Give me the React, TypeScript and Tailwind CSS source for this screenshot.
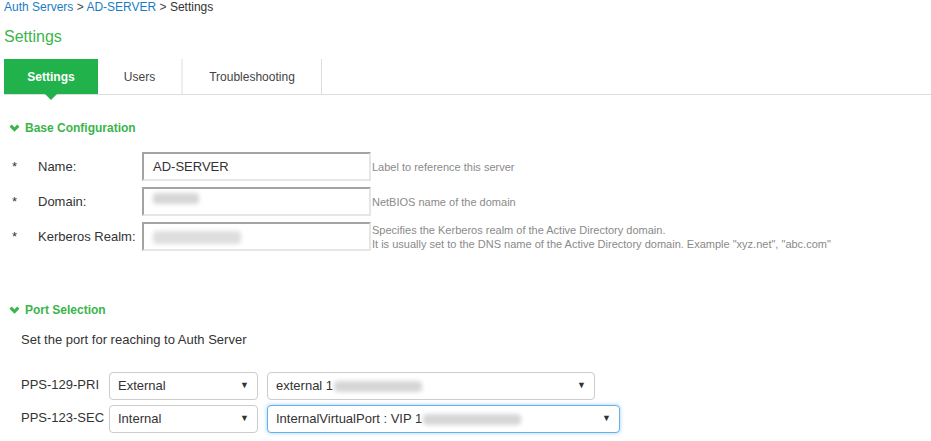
import React from 'react';

const green = 'text-[#3bb54a]';

function Chevron() {
  return (
    <svg width="11" height="8" viewBox="0 0 11 8" className="mr-[5px] shrink-0">
      <polyline points="1.6,1.6 5.5,5.6 9.4,1.6" fill="none" stroke="#3bb54a" strokeWidth="3" />
    </svg>
  );
}

function SectionHeader({ title }: { title: string }) {
  return (
    <div className={`flex items-center h-[16px] pl-[9px] text-[12px] font-bold ${green}`}>
      <Chevron />
      <span>{title}</span>
    </div>
  );
}

function Blur({ w, className = '' }: { w: number; className?: string }) {
  return (
    <span
      className={`inline-block h-[11px] bg-[#d6d6d6] blur-[2px] rounded-sm align-middle ${className}`}
      style={{ width: w }}
    />
  );
}

function FieldRow({
  label,
  children,
  help,
}: {
  label: string;
  children: React.ReactNode;
  help: React.ReactNode;
}) {
  return (
    <div className="flex items-center h-[29px]">
      <span className="w-[24px] shrink-0 pl-[12px] text-[13px] text-[#333]">*</span>
      <span className="w-[118px] shrink-0 pl-[14px] text-[13px] text-[#333] whitespace-nowrap">{label}</span>
      <div className="w-[229px] shrink-0 h-[29px] flex items-center pl-[9px] text-[13px] text-[#333] border-2 border-t-[#a3a3a3] border-l-[#a3a3a3] border-r-[#e6e6e6] border-b-[#e6e6e6]">
        {children}
      </div>
      <div className="pl-[1px] text-[11px] leading-[14px] text-[#8a8a8a] whitespace-nowrap">{help}</div>
    </div>
  );
}

function Select({
  width,
  focus = false,
  children,
}: {
  width: number;
  focus?: boolean;
  children: React.ReactNode;
}) {
  return (
    <div
      className={`h-[28px] shrink-0 flex items-center justify-between pl-[8px] pr-[8px] rounded-[4px] text-[13px] text-[#333] bg-white border ${
        focus ? 'border-[#66afe9] shadow-[0_0_4px_rgba(102,175,233,0.6)]' : 'border-[#cccccc]'
      }`}
      style={{ width }}
    >
      <span className="flex items-center whitespace-nowrap">{children}</span>
      <span className="text-[9px] text-[#333]">▼</span>
    </div>
  );
}

export default function App() {
  return (
    <div className="w-[931px] h-[441px] bg-white overflow-hidden font-['Liberation_Sans',Arial,sans-serif]">
      <div className="h-[15px] leading-[15px] pl-[4px] text-[12px]">
        <span className="text-[#1a7dc4]">Auth Servers</span>
        <span className="text-[#444]"> &gt; </span>
        <span className="text-[#1a7dc4]">AD-SERVER</span>
        <span className="text-[#444]"> &gt; </span>
        <span className="text-[#333]">Settings</span>
      </div>

      <div className={`mt-[11px] h-[22px] leading-[22px] pl-[4px] text-[16px] ${green}`}>Settings</div>

      <div className="mt-[11px] ml-[4px] flex h-[36px] border-b border-[#dddddd]">
        <div className="relative w-[94px] h-[35px] flex items-center justify-center bg-[#22b24c] text-white text-[12px] font-bold">
          Settings
          <span className="absolute left-[41px] top-[35px] w-0 h-0 border-l-[6px] border-r-[6px] border-t-[6px] border-l-transparent border-r-transparent border-t-[#22b24c]" />
        </div>
        <div className="w-[85px] h-[35px] flex items-center justify-center text-[12px] text-[#444] border-r-2 border-[#eeeeee]">
          Users
        </div>
        <div className="w-[139px] h-[35px] flex items-center justify-center text-[12px] text-[#444] border-r border-[#dddddd]">
          Troubleshooting
        </div>
      </div>

      <div className="mt-[25px]">
        <SectionHeader title="Base Configuration" />
      </div>

      <div className="mt-[16px] flex flex-col gap-[6px]">
        <FieldRow label="Name:" help="Label to reference this server">
          AD-SERVER
        </FieldRow>
        <FieldRow label="Domain:" help="NetBIOS name of the domain">
          <Blur w={46} className="mb-[6px]" />
        </FieldRow>
        <FieldRow
          label="Kerberos Realm:"
          help={
            <>
              <div>Specifies the Kerberos realm of the Active Directory domain.</div>
              <div>It is usually set to the DNS name of the Active Directory domain. Example "xyz.net", "abc.com"</div>
            </>
          }
        >
          <Blur w={88} className="mt-[2px] h-[13px] bg-[#dedede]" />
        </FieldRow>
      </div>

      <div className="mt-[51px]">
        <SectionHeader title="Port Selection" />
      </div>

      <div className="mt-[14px] pl-[21px] h-[16px] leading-[16px] text-[13px] text-[#333]">
        Set the port for reaching to Auth Server
      </div>

      <div className="mt-[24px] pl-[21px] flex flex-col gap-[5px]">
        <div className="flex items-start">
          <span className="w-[88px] shrink-0 pt-[3px] text-[13px] text-[#333]">PPS-129-PRI</span>
          <Select width={149}>External</Select>
          <div className="w-[9px] shrink-0" />
          <Select width={328}>
            external 1
            <Blur w={88} className="ml-[1px]" />
          </Select>
        </div>
        <div className="flex items-start">
          <span className="w-[88px] shrink-0 pt-[3px] text-[13px] text-[#333]">PPS-123-SEC</span>
          <Select width={149}>Internal</Select>
          <div className="w-[9px] shrink-0" />
          <Select width={353} focus>
            InternalVirtualPort : VIP 1
            <Blur w={98} className="ml-[1px]" />
          </Select>
        </div>
      </div>
    </div>
  );
}
